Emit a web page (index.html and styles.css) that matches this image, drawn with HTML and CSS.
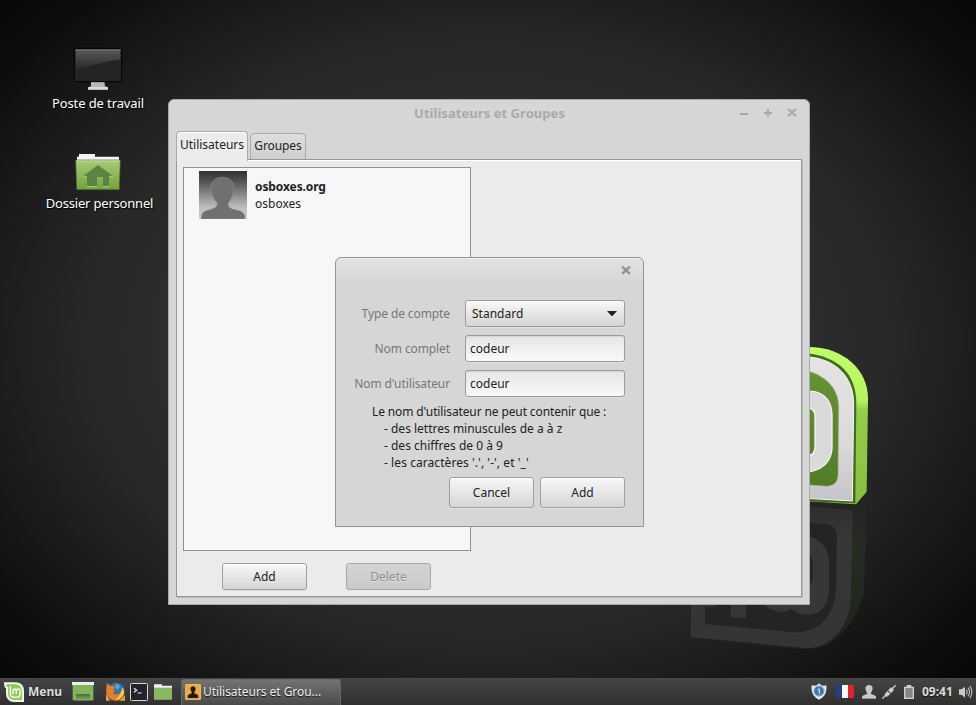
FILE: index.html
```html
<!DOCTYPE html>
<html lang="fr">
<head>
<meta charset="utf-8">
<title>Utilisateurs et Groupes</title>
<link rel="stylesheet" href="styles.css">
</head>
<body>
<div class="desktop">
  <svg class="wall-logo" width="210" height="325" viewBox="0 0 630 975">
    <defs>
      <linearGradient id="side" x1="0" y1="0" x2="0" y2="1"><stop offset="0" stop-color="#bfff66"/><stop offset=".34" stop-color="#b5f45f"/><stop offset=".4" stop-color="#93cf4b"/><stop offset="1" stop-color="#88bd40"/></linearGradient>
      <linearGradient id="face" x1="0" y1="0" x2="0" y2="1"><stop offset="0" stop-color="#e4e4e4"/><stop offset=".6" stop-color="#dadada"/><stop offset="1" stop-color="#c5c4c8"/></linearGradient>
      <linearGradient id="well" x1="0" y1="0" x2="0" y2="1"><stop offset="0" stop-color="#679333"/><stop offset="1" stop-color="#527c28"/></linearGradient>
      <linearGradient id="mirror" gradientUnits="userSpaceOnUse" x1="0" y1="500" x2="0" y2="950"><stop offset="0" stop-color="#232423"/><stop offset=".3" stop-color="#272c24"/><stop offset="1" stop-color="#1d2319"/></linearGradient>
      <linearGradient id="mirror-face" gradientUnits="userSpaceOnUse" x1="0" y1="515" x2="0" y2="940"><stop offset="0" stop-color="#2c2c2c"/><stop offset=".2" stop-color="#373737"/><stop offset="1" stop-color="#343434"/></linearGradient>
    </defs>
    <path d="M380 36C490 34 564 105 564 190L560 470L528 508L380 499Z" fill="url(#side)"/>
    <path d="M380 55C476 65 529 118 529 205L526 505L380 499Z" fill="#426b20"/>
    <path d="M380 65C470 72 521 126 521 208L517 498L380 490Z" fill="url(#face)" stroke="#f5f5f5" stroke-width="3"/>
    <path d="M380 107C438 122 476 160 476 218L474 423Q472 452 442 454L380 449Z" fill="url(#well)" stroke="#a5b095" stroke-width="2"/>
    <path d="M380 170C425 164 456 194 456 240V340C454 380 430 404 380 413V363Q405 361 405 336V243Q405 220 380 216Z" fill="#dadada" stroke="#f4f4f4" stroke-width="4"/>
    <path d="M380 503L528 509L560 480L552 770C540 830 495 900 442 930C400 950 330 946 27 909L33 780H380Z" fill="url(#mirror)"/>
    <path d="M380 516L516 528L511 790C505 880 450 938 380 938L34 905V780H380Z" fill="url(#mirror-face)" stroke="#3c3c3c" stroke-width="2"/>
    <path d="M380 564L440 567Q470 572 471 604L468 765C462 840 420 892 345 892L75 867V780H380Z" fill="#222521"/>
    <path d="M380 603C420 610 447 640 447 680V760C446 810 425 839 385 839Q350 838 333 821Q320 831 300 831Q265 826 240 800H380V755Q398 750 398 730V685Q398 660 380 650Z" fill="#373737"/>
    <path d="M152 790H198V850L152 846ZM75 790H120L105 816L75 814Z" fill="#363636"/>
  </svg>

  <div class="launcher computer">
    <svg width="50" height="44" viewBox="129 51 150 132">
      <defs><linearGradient id="screen" x1="0" y1="0" x2="0" y2="1"><stop offset="0" stop-color="#595959"/><stop offset="1" stop-color="#292929"/></linearGradient></defs>
      <path d="M183 154H223L225 169L234 172V180H174V172L183 169Z" fill="#b8b8b8"/><path d="M175 172H233V176H175Z" fill="#eee"/>
      <rect x="133" y="55" width="142" height="100" rx="4" fill="#242424" stroke="#030303" stroke-width="3"/>
      <path d="M137 59H271V89C228 91 180 112 137 117Z" fill="url(#screen)"/><path d="M136 58H272V62H136Z" fill="#6a6a6a"/>
    </svg>
    <span class="name">Poste de travail</span>
  </div>
  <div class="launcher home">
    <svg width="46" height="38" viewBox="135 369 138 114">
      <defs><linearGradient id="folder" x1="0" y1="0" x2="0" y2="1"><stop offset="0" stop-color="#a8cb78"/><stop offset="1" stop-color="#75a13e"/></linearGradient></defs>
      <path d="M141 392V380H147V372H195V380H267V392Z" fill="#f5f5f5"/>
      <path d="M137 390H271L268 479H140Z" fill="url(#folder)" stroke="#3f5b26" stroke-width="2"/><path d="M139 393H269" stroke="#c4e29b" stroke-width="3"/>
      <path d="M160 438L204 405L249 438H237V470H219V441H201V470H171V438Z" fill="#5b8442"/><path d="M171 470H201M219 470H237M160 439H171M237 439H249" stroke="#aed17e" stroke-width="3"/>
    </svg>
    <span class="name">Dossier personnel</span>
  </div>

  <section class="window">
    <header class="titlebar">
      <h1>Utilisateurs et Groupes</h1>
      <svg class="controls" width="60" height="12" viewBox="0 0 60 12"><path d="M2 7H10M26 6H34M30 2V10M50 2L58 9M58 2L50 9" fill="none" stroke="#aaa" stroke-width="2.2"/></svg>
    </header>
    <nav class="tabs">
      <div class="tab active"><span>Utilisateurs</span></div>
      <div class="tab"><span>Groupes</span></div>
    </nav>
    <main class="panel">
      <div class="user-list">
        <div class="user">
          <svg width="48" height="48" viewBox="0 0 144 144">
            <defs><linearGradient id="avatar" x1="0" y1="0" x2="0" y2="1"><stop offset="0" stop-color="#303030"/><stop offset=".2" stop-color="#505050"/><stop offset=".75" stop-color="#bcbcbc"/><stop offset="1" stop-color="#cdcdcd"/></linearGradient></defs>
            <rect width="144" height="144" fill="url(#avatar)"/>
            <path d="M7 144C7 126 14 121 30 117C49 112 56 108 55 96C44 84 41 74 37 61C30 37 45 19 70 19C97 19 109 37 103 61C99 77 96 87 87 96C86 109 94 114 115 118C132 122 138 128 138 144Z" fill="#707070" stroke="#858585" stroke-width="2"/>
          </svg>
          <div class="user-text"><strong>osboxes.org</strong><span>osboxes</span></div>
        </div>
      </div>
      <div class="actions"><button class="btn">Add</button><button class="btn" disabled>Delete</button></div>
    </main>
  </section>

  <section class="dialog">
    <header class="dialog-head"><svg width="10" height="10" viewBox="0 0 10 10"><path d="M1.2 1.6L8.8 8.8M8.8 1.6L1.2 8.8" stroke="#929292" stroke-width="2.4"/></svg></header>
    <div class="form">
      <label>Type de compte</label>
      <div class="field select"><span>Standard</span><svg width="10" height="5" viewBox="0 0 10 5"><path d="M0 0H10L5.500 5H4.500Z" fill="#222"/></svg></div>
      <label>Nom complet</label>
      <div class="field">codeur</div>
      <label>Nom d'utilisateur</label>
      <div class="field">codeur</div>
    </div>
    <div class="hint">
      <div class="lead">Le nom d'utilisateur ne peut contenir que :</div>
      <div class="item">- des lettres minuscules de a à z</div>
      <div class="item">- des chiffres de 0 à 9</div>
      <div class="item chars">- les caractères '.', '-', et '_'</div>
    </div>
    <div class="dialog-actions"><button class="btn">Cancel</button><button class="btn">Add</button></div>
  </section>

  <footer class="taskbar">
    <svg class="mint" width="20" height="20" viewBox="0 0 60 60">
      <path d="M0 1H36Q60 3 60 28V60H28Q6 58 6 34V19Q0 18 0 1Z" fill="#f2f7ed"/>
      <path d="M7 7H34Q54 8 54 29V54H30Q12 53 12 34V14H7Z" fill="#90c85b"/>
      <path d="M19 13V34Q19 46 30 46H38Q48 46 48 36V28Q48 21 42.500 21Q37 21 37 27V37M37 27Q37 21 32 21Q27 21 27 27V37" fill="none" stroke="#f4f9ef" stroke-width="4.500"/>
    </svg>
    <span class="menu">Menu</span>
    <svg class="show-desktop" width="22" height="19" viewBox="0 0 66 57"><defs><linearGradient id="desk" x1="0" y1="0" x2="0" y2="1"><stop offset="0" stop-color="#456b2e"/><stop offset="1" stop-color="#86b268"/></linearGradient></defs><path d="M2 9H64V55H2Z" fill="#83b35a"/><path d="M12 36H54V55H12Z" fill="url(#desk)"/><path d="M0 0H66V9H0Z" fill="#eee"/></svg>
    <svg class="firefox" width="19" height="19" viewBox="0 0 57 57"><path d="M0 1H57V56H0Z" fill="#2a4a68"/><path d="M0 34L12 56H0ZM57 40V56H40Z" fill="#e9a33a"/><circle cx="31" cy="25" r="23" fill="#3674ad"/><path d="M28 8Q38 4 42 14L34 23Q27 18 28 8" fill="#5fa9d4"/><path d="M3 4L15 13Q25 11 28 15L22 24L28 28L20 32Q25 40 37 36Q49 31 48 14Q58 24 54 38Q47 56 29 56Q4 54 1 29Q0 16 3 4Z" fill="#e97c25"/><path d="M50 16Q57 31 49 43Q41 54 28 52Q45 43 50 16" fill="#ffd449"/></svg>
    <svg class="terminal" width="18" height="18" viewBox="0 0 54 54"><rect x="1.500" y="1.500" width="51" height="51" rx="3" fill="#25222d" stroke="#d7d7d7" stroke-width="3"/><path d="M12 16L20 22L12 28M23 30H35" fill="none" stroke="#eee" stroke-width="3.500"/></svg>
    <svg class="files" width="18" height="16" viewBox="0 0 54 48"><path d="M0 8V1H24V5H54V12H0Z" fill="#f1f1ee"/><path d="M0 11H54V48H0Z" fill="#8bb761"/><path d="M0 47H54" stroke="#638b3e" stroke-width="2"/></svg>
    <div class="task">
      <svg width="16" height="16" viewBox="0 0 48 48"><rect x="1" y="1" width="46" height="46" rx="3" fill="#edae3c" stroke="#ffd27a" stroke-width="2"/><path d="M9 41V35Q10 31 21 29V25Q12 8 24 8Q36 8 27 25V29Q38 31 39 35V41Z" fill="#191918" stroke="#191918" stroke-width="2"/></svg>
      <span>Utilisateurs et Grou...</span>
    </div>
    <div class="tray">
      <svg class="shield" width="16" height="17" viewBox="0 0 48 51"><path d="M24 1L31 7Q39 9 46 7Q50 38 24 50Q-2 38 2 7Q10 9 17 7Z" fill="#e5e5e5"/><circle cx="24" cy="24" r="15" fill="#3f73ad" stroke="#91a9c4" stroke-width="3"/><path d="M24 14V17M20 21H25V34" fill="none" stroke="#b1d6fc" stroke-width="4"/></svg>
      <svg class="flag" width="18" height="13" viewBox="0 0 18 13"><path fill="#243f87" d="M0 0H6V13H0Z"/><path fill="#fafafa" d="M6 0H12V13H6Z"/><path fill="#da2430" d="M12 0H18V13H12Z"/></svg>
      <svg class="person" width="14" height="14" viewBox="0 0 42 42"><path d="M0 40V35Q4 31 16 28V24Q4 2 21 1Q38 2 26 24V28Q38 31 42 35V40Z" fill="#c9c9c9" stroke="#c9c9c9" stroke-width="2"/></svg>
      <svg class="network" width="14" height="14" viewBox="0 0 42 42"><path d="M1 41L13 29M29 13L41 1" stroke="#ccc" stroke-width="4"/><path d="M7 29L16 18L25 27L14 36ZM18 16L27 7L36 14L27 25Z" fill="#ccc"/></svg>
      <svg class="battery" width="10" height="14" viewBox="0 0 30 42"><path d="M8 0H22V5H30V42H0V5H8Z" fill="#d0d0d0"/><path d="M4 9H26V38H4Z" fill="#858585"/></svg>
      <span class="clock">09:41</span>
      <svg class="sound" width="14" height="14" viewBox="0 0 42 42"><path d="M0 13H8L18 5V38L8 29H0Z" fill="#ccc"/><path d="M22 14Q27 21 22 28M27 8Q36 21 27 34M33 3Q44 21 33 39" fill="none" stroke="#bbb" stroke-width="3.500"/></svg>
    </div>
  </footer>
</div>
</body>
</html>
```
FILE: styles.css
```css
* { box-sizing: border-box; }
body { margin: 0; font: 12px/17px "Noto Sans", sans-serif; color: #222; }
.desktop { position: relative; display: flex; flex-direction: column; justify-content: flex-end; width: 976px; height: 705px; overflow: hidden; background: radial-gradient(ellipse 600px 440px at 488px 340px, #383838 0%, #313131 42%, #272727 68%, #1b1b1b 84%, #0e0e0e 100%, #030303 120%); }
.wall-logo { position: absolute; left: 680px; top: 335px; }
.launcher { position: absolute; display: flex; flex-direction: column; align-items: center; gap: 3px; width: 110px; color: #fff; font-size: 13px; line-height: 18px; white-space: nowrap; text-shadow: 1px 1px 1px #000; }
.computer { left: 43px; top: 47px; }
.computer .name { letter-spacing: -.1px; }
.home { left: 43px; top: 153px; }
.home .name { margin-left: 3px; letter-spacing: -.2px; }

.window { position: absolute; left: 168px; top: 99px; width: 642px; height: 506px; padding: 0 7px 7px; display: flex; flex-direction: column; background: #d6d6d6; border: 1px solid #aaa; border-radius: 6px 6px 0 0; }
.titlebar { height: 31px; flex: none; display: grid; grid-template-columns: 1fr; align-items: center; position: relative; }
.titlebar h1 { margin: -6px 0 0 1px; font-size: 13px; line-height: 18px; letter-spacing: .05px; text-align: center; color: #aaa; }
.controls { position: absolute; right: 4px; top: 7px; }
.tabs { height: 29px; flex: none; display: flex; align-items: flex-end; gap: 2px; }
.tab { height: 27px; width: 56px; display: flex; justify-content: center; align-items: center; padding-bottom: 2px; border: 1px solid #aaa; border-radius: 4px 4px 0 0; background: linear-gradient(#dedede, #cecece); letter-spacing: -.1px; }
.tab.active { position: relative; z-index: 1; height: 30px; width: 72px; margin-bottom: -1px; padding-bottom: 4px; background: #ececec; border-bottom: 0; box-shadow: inset 0 1px #fff; letter-spacing: 0; }
.tab span { white-space: nowrap; }
.panel { flex: 1; display: flex; flex-direction: column; margin-top: -1px; padding: 7px 6px 6px; background: #ebebeb; border: 1px solid #989898; box-shadow: inset 0 1px #fff, 1px 1px #bcbcbc; }
.user-list { width: 288px; height: 384px; padding: 3px 15px; background: #f7f7f7; border: 1px solid #929292; }
.user { display: flex; align-items: center; gap: 8px; }
.user-text { display: flex; flex-direction: column; }
.user-text strong { letter-spacing: -.1px; }
.actions { display: flex; gap: 39px; margin: 12px 0 0 39px; }
.btn { width: 85px; height: 27px; padding: 0; font: inherit; color: #222; background: linear-gradient(#f7f7f7, #d6d6d6); border: 1px solid #a0a0a0; border-radius: 3px; box-shadow: inset 0 1px #fff, 0 1px #e0e0e0; }
.btn:disabled { color: #909090; background: linear-gradient(#d4d4d4, #cacaca); border-color: #a9a9a9; box-shadow: none; text-shadow: 0 1px #e2e2e2; }

.dialog { position: absolute; left: 335px; top: 257px; width: 309px; height: 270px; background: linear-gradient(#e3e3e3, #d6d6d6 25px); border: 1px solid #949494; border-radius: 6px 6px 0 0; box-shadow: inset 0 1px #eee; padding: 0 18px; }
.dialog-head { height: 42px; display: flex; justify-content: flex-end; padding: 7px 0 0; margin-right: -6px; }
.form { display: grid; grid-template-columns: 1fr 160px; column-gap: 15px; row-gap: 8px; align-items: center; }
.form label { text-align: right; color: #777; white-space: nowrap; margin-left: -4px; letter-spacing: -.1px; }
.field { height: 27px; padding: 0 4px; line-height: 25px; background: linear-gradient(#e6e6e6, #f9f9f9); border: 1px solid #9b9b9b; border-radius: 3px; box-shadow: inset 0 1px 1px #d4d4d4, 0 1px #e0e0e0; }
.select { display: flex; align-items: center; justify-content: space-between; padding: 0 7px 0 6px; background: linear-gradient(#f8f8f8, #d5d5d5); box-shadow: inset 0 1px #fff, 0 1px #e0e0e0; }
.hint { margin: 6px 0 0 18px; white-space: nowrap; }
.lead { letter-spacing: -.12px; }
.item { padding-left: 12px; }
.chars { letter-spacing: .07px; }
.dialog-actions { display: flex; justify-content: flex-end; gap: 6px; margin-top: 6px; }
.dialog-actions .btn { height: 31px; }

.taskbar { position: relative; height: 27px; padding-bottom: 1px; display: flex; align-items: center; color: #ddd; background: linear-gradient(#444, #303030); border-top: 1px solid #484848; white-space: nowrap; text-shadow: 0 1px 1px #111; }
.taskbar svg { flex: none; }
.mint { margin-left: 4px; }
.menu { width: 36px; margin-left: 4px; font-weight: bold; }
.show-desktop { margin-left: 8px; }
.firefox { margin-left: 12px; }
.terminal { margin-left: 5px; }
.files { margin-left: 6px; }
.task { align-self: stretch; width: 160px; margin: 0 0 -1px 9px; padding: 0 0 2px 3px; display: flex; align-items: center; gap: 3px; color: #eee; background: linear-gradient(#737373, #4a4a4a); border: 1px solid #676767; border-bottom: 0; border-radius: 3px 3px 0 0; }
.task span { margin-left: -1px; letter-spacing: -.05px; }
.tray { margin-left: auto; display: flex; align-items: center; padding-right: 3px; }
.flag { margin-left: 9px; }
.person { margin-left: 8px; }
.network { margin-left: 6px; }
.battery { margin-left: 8px; }
.clock { width: 31px; margin-left: 8px; font-weight: bold; }
.sound { margin-left: 6px; }
```
